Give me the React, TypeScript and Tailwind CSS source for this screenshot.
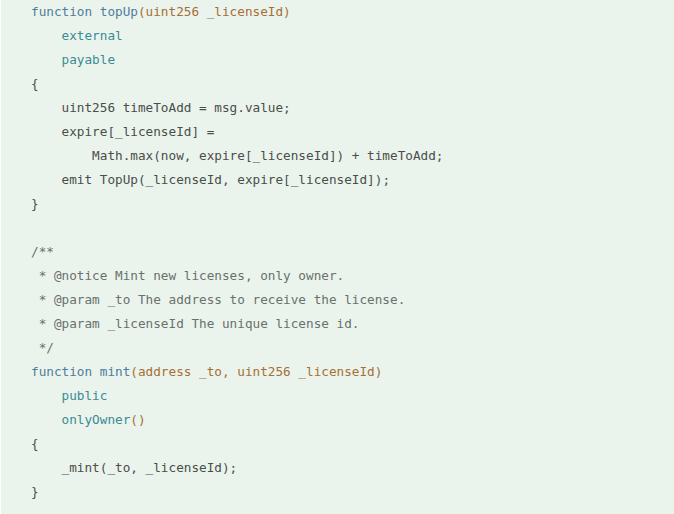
const kw = 'text-[#4f7d9b]';
const br = 'text-[#a66f36]';
const mod = 'text-[#3a8b94]';
const cm = 'text-[#6b706c]';

type Line = { indent: number; parts: [string, string?][] };

const lines: Line[] = [
  { indent: 0, parts: [['function topUp', kw], ['(uint256 _licenseId)', br]] },
  { indent: 1, parts: [['external', mod]] },
  { indent: 1, parts: [['payable', mod]] },
  { indent: 0, parts: [['{']] },
  { indent: 1, parts: [['uint256 timeToAdd = msg.value;']] },
  { indent: 1, parts: [['expire[_licenseId] =']] },
  { indent: 2, parts: [['Math.max(now, expire[_licenseId]) + timeToAdd;']] },
  { indent: 1, parts: [['emit TopUp(_licenseId, expire[_licenseId]);']] },
  { indent: 0, parts: [['}']] },
  { indent: 0, parts: [] },
  { indent: 0, parts: [['/**', cm]] },
  { indent: 0, parts: [[' * @notice Mint new licenses, only owner.', cm]] },
  { indent: 0, parts: [[' * @param _to The address to receive the license.', cm]] },
  { indent: 0, parts: [[' * @param _licenseId The unique license id.', cm]] },
  { indent: 0, parts: [[' */', cm]] },
  { indent: 0, parts: [['function mint', kw], ['(address _to, uint256 _licenseId)', br]] },
  { indent: 1, parts: [['public', mod]] },
  { indent: 1, parts: [['onlyOwner', mod], ['()', br]] },
  { indent: 0, parts: [['{']] },
  { indent: 1, parts: [['_mint(_to, _licenseId);']] },
  { indent: 0, parts: [['}']] },
];

export default function App() {
  return (
    <div className="w-[674px] h-[514px] overflow-hidden bg-white pl-px">
      <div className="h-full bg-[#eaf4ed] pl-[30px]">
        <pre className="font-['DejaVu_Sans_Mono',monospace] text-[12.7px] leading-[24px] text-[#4a4d4b]">
          {lines.map((l, i) => (
            <div key={i} className="h-[24px] whitespace-pre">
              {'    '.repeat(l.indent)}
              {l.parts.map(([t, c], j) => (
                <span key={j} className={c}>
                  {t}
                </span>
              ))}
            </div>
          ))}
        </pre>
      </div>
    </div>
  );
}
